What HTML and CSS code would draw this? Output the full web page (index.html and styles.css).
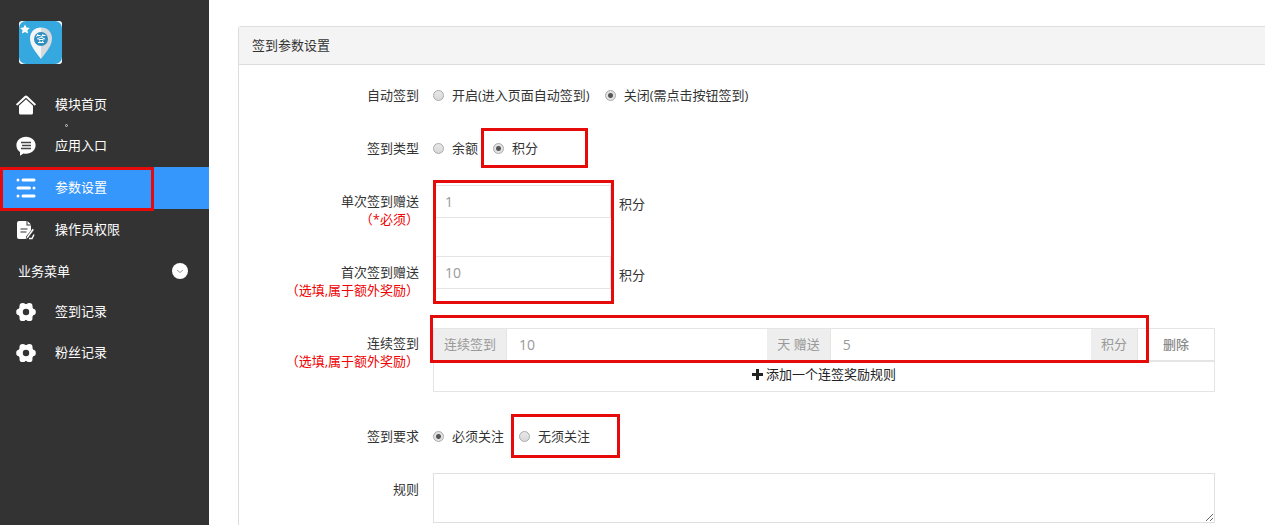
FILE: index.html
```html
<!DOCTYPE html>
<html lang="zh-Hans">
<head>
  <meta charset="UTF-8">
  <meta name="viewport" content="width=device-width, initial-scale=1.0">
  <title>签到参数设置</title>
  <link rel="stylesheet" href="styles.css">
</head>
<body>
  <div class="layout">
    <aside class="sidebar">
      <div class="logo">
        <svg viewBox="0 0 43 43" aria-hidden="true">
          <rect width="43" height="43" rx="3" fill="#fff"/>
          <rect width="43" height="43" rx="7" fill="#35a8e0"/>
          <path d="M6 3.500l1.500 3 3.300.4-2.400 2.300.7 3.300L6 11l-3.100 1.500.7-3.300L1.200 6.900l3.300-.4z" fill="#fff"/>
          <path d="M22 6.500C15.500 6.500 11 11 11 17.500 11 25 17 31 22 38z" fill="#f3f5f6"/>
          <path d="M22 6.500C28.500 6.500 33 11 33 17.500 33 25 27 31 22 38z" fill="#d5dade"/>
          <circle cx="22" cy="18" r="7" fill="#2f8fc0"/>
          <path d="M18 14.500h3.500M23 14.500h3.500M19 13l-1.500 3M24 13l-1.500 3M18 18l4-2 4 2M19.500 18.500h5M19 21.500h6M20.500 19.500l.7 1.500M24 19.500l-.7 1.500" fill="none" stroke="#fff"/>
        </svg>
      </div>
      <nav class="menu">
        <a class="menu-item" href="#">
          <svg class="icon" viewBox="0 0 20 20" fill="#fff" aria-hidden="true">
            <path d="M10 .5q.7 0 1.300.6l8.200 7.700q.6.7 0 1.300t-1.300.1L10 2.700 1.800 10.200q-.7.500-1.300-.1t0-1.300L8.700 1.100Q9.300.5 10 .5z"/>
            <path d="M10 4.300l7 6.500V18q0 1.500-1.500 1.500h-11Q3 19.500 3 18v-7.200z"/>
          </svg>
          <span>模块首页</span>
          <i class="speck"></i>
        </a>
        <a class="menu-item" href="#">
          <svg class="icon" viewBox="0 0 20 20" aria-hidden="true">
            <path d="M10 .8c5.500 0 9.600 3.700 9.600 8.500s-4.100 8.400-9.600 8.400c-.9 0-1.800-.1-2.600-.3L4 19.800v-3.700C1.800 14.600.4 12.200.4 9.300.4 4.500 4.500.8 10 .8z" fill="#fff"/>
            <path d="M5 6.500h10M6 9.500h9M5 12.500h10" stroke="#444" stroke-width="1.300"/>
          </svg>
          <span>应用入口</span>
        </a>
        <a class="menu-item active" href="#">
          <svg class="icon" viewBox="0 0 20 20" fill="none" stroke="#fff" stroke-width="3" stroke-linecap="round" aria-hidden="true">
            <path d="M2 2h.01M7 2h11M2 10h11.500M18 10h.01M2 18h.01M7 18h11"/>
          </svg>
          <span>参数设置</span>
          <b class="mark mark-menu"></b>
        </a>
        <a class="menu-item" href="#">
          <svg class="icon" viewBox="0 0 20 20" aria-hidden="true">
            <path d="M3 1h7.500v4.500H15V11l-5 5.500V19H3q-2 0-2-2V3q0-2 2-2z" fill="#fff"/>
            <path d="M11.500 1l3.500 3.500h-3.500z" fill="#fff"/>
            <path d="M4.500 9h7M4.500 12h6" stroke="#333" stroke-width="1.200"/>
            <path d="M16.500 8.500l1.700 1.300-6 8-2.200 1.700.7-2.900z" fill="#fff" stroke="#333" stroke-width=".5"/>
            <path d="M13 18.500h3l2-4" fill="none" stroke="#fff" stroke-width="1.400"/>
          </svg>
          <span>操作员权限</span>
        </a>
        <button class="menu-title" type="button">
          <span>业务菜单</span>
          <svg class="toggle" viewBox="0 0 16 16" aria-hidden="true">
            <circle cx="8" cy="8" r="8" fill="#fff"/>
            <path d="M5 7l3 2.500L11 7" fill="none" stroke="#999"/>
          </svg>
        </button>
        <a class="menu-item" href="#">
          <svg class="icon" viewBox="0 0 20 20" aria-hidden="true">
            <g fill="#fff">
              <circle cx="10" cy="10" r="8"/>
              <circle cx="16.600" cy="10" r="3.200"/>
              <circle cx="3.400" cy="10" r="3.200"/>
              <circle cx="13.300" cy="4.100" r="3.200"/>
              <circle cx="6.700" cy="4.100" r="3.200"/>
              <circle cx="13.300" cy="15.900" r="3.200"/>
              <circle cx="6.700" cy="15.900" r="3.200"/>
            </g>
            <circle cx="10" cy="10" r="3.200" fill="#333"/>
          </svg>
          <span>签到记录</span>
        </a>
        <a class="menu-item" href="#">
          <svg class="icon" viewBox="0 0 20 20" aria-hidden="true">
            <g fill="#fff">
              <circle cx="10" cy="10" r="8"/>
              <circle cx="16.600" cy="10" r="3.200"/>
              <circle cx="3.400" cy="10" r="3.200"/>
              <circle cx="13.300" cy="4.100" r="3.200"/>
              <circle cx="6.700" cy="4.100" r="3.200"/>
              <circle cx="13.300" cy="15.900" r="3.200"/>
              <circle cx="6.700" cy="15.900" r="3.200"/>
            </g>
            <circle cx="10" cy="10" r="3.200" fill="#333"/>
          </svg>
          <span>粉丝记录</span>
        </a>
      </nav>
    </aside>

    <main class="content">
      <form class="panel">
        <h1 class="panel-heading">签到参数设置</h1>
        <div class="panel-body">
          <div class="form-row" role="radiogroup" aria-labelledby="auto-label">
            <div class="form-label" id="auto-label">自动签到</div>
            <div class="radios">
              <label class="radio"><input type="radio" name="auto" value="1">开启(进入页面自动签到)</label>
              <label class="radio"><input type="radio" name="auto" value="0" checked>关闭(需点击按钮签到)</label>
            </div>
          </div>

          <div class="form-row" role="radiogroup" aria-labelledby="type-label">
            <div class="form-label" id="type-label">签到类型</div>
            <div class="radios">
              <label class="radio"><input type="radio" name="type" value="balance">余额</label>
              <label class="radio"><input type="radio" name="type" value="credit" checked>积分<b class="mark mark-type"></b></label>
            </div>
          </div>

          <div class="form-row">
            <label class="form-label" for="single">单次签到赠送<span class="hint">（*必须）</span></label>
            <div class="field">
              <input class="text-input" type="text" id="single" value="1">
              <span class="unit">积分</span>
              <b class="mark mark-gift"></b>
            </div>
          </div>

          <div class="form-row">
            <label class="form-label" for="first">首次签到赠送<span class="hint">（选填,属于额外奖励）</span></label>
            <div class="field">
              <input class="text-input" type="text" id="first" value="10">
              <span class="unit">积分</span>
            </div>
          </div>

          <div class="form-row">
            <label class="form-label" for="days">连续签到<span class="hint">（选填,属于额外奖励）</span></label>
            <div class="rules">
              <div class="rule">
                <label class="addon" for="days">连续签到</label>
                <input class="rule-input" type="text" id="days" value="10">
                <label class="addon" for="reward">天 赠送</label>
                <input class="rule-input" type="text" id="reward" value="5">
                <span class="addon">积分</span>
                <a class="delete" href="#">删除</a>
                <b class="mark mark-rule"></b>
              </div>
              <button class="add-rule" type="button">
                <svg class="plus" viewBox="0 0 11 11" aria-hidden="true"><path d="M5.500 0v11M0 5.500h11" stroke="#222" stroke-width="3"/></svg>
                添加一个连签奖励规则
              </button>
            </div>
          </div>

          <div class="form-row" role="radiogroup" aria-labelledby="follow-label">
            <div class="form-label" id="follow-label">签到要求</div>
            <div class="radios">
              <label class="radio"><input type="radio" name="follow" value="1" checked>必须关注</label>
              <label class="radio"><input type="radio" name="follow" value="0">无须关注<b class="mark mark-follow"></b></label>
            </div>
          </div>

          <div class="form-row">
            <label class="form-label" for="desc">规则</label>
            <textarea class="desc" id="desc"></textarea>
          </div>
        </div>
      </form>
    </main>
  </div>
</body>
</html>
```
FILE: styles.css
```css
* { box-sizing: border-box; }
body {
  margin: 0;
  font-family: "Open Sans", "Noto Sans CJK SC", sans-serif;
  font-size: 13px;
  line-height: 18px;
  color: #333;
  background: #fff;
}
input, button, textarea {
  font-family: inherit;
  font-size: 13px;
  line-height: 18px;
}
a {
  text-decoration: none;
}
.layout {
  display: flex;
  min-height: 100vh;
}

/* sidebar */
.sidebar {
  flex: 0 0 209px;
  background: #333;
}
.logo {
  padding: 21px 19px 20px;
}
.logo svg {
  display: block;
  width: 43px;
  height: 43px;
}
.menu-item, .menu-title {
  position: relative;
  display: flex;
  align-items: center;
  width: 100%;
  height: 41px;
  color: #fff;
}
.menu-item {
  gap: 19px;
  padding: 0 16px;
}
.menu-item span {
  padding-bottom: 2px;
}
.menu-item.active {
  height: 42px;
  margin-top: 1px;
  background: #3596fc;
}
.menu-title {
  justify-content: space-between;
  padding: 0 21px 0 18px;
  border: 0;
  background: none;
  cursor: pointer;
}
.icon {
  width: 20px;
  height: 20px;
}
.toggle {
  width: 16px;
  height: 16px;
}
.speck {
  position: absolute;
  left: 65px;
  bottom: -2px;
  width: 3px;
  height: 3px;
  border: 1px solid #ccc;
  border-radius: 50%;
}

/* panel */
.content {
  flex: 1;
  display: flex;
  min-width: 0;
  padding: 26px 0 0 29px;
}
.panel {
  flex: 1;
  min-width: 0;
  border: 1px solid #ddd;
  border-width: 1px 0 0 1px;
  border-radius: 3px 0 0 0;
}
.panel-heading {
  margin: 0;
  padding: 9px 13px 10px;
  font-size: 13px;
  font-weight: normal;
  line-height: 18px;
  background: #f4f4f4;
  border-bottom: 1px solid #ddd;
}
.panel-body {
  display: grid;
  gap: 21px;
  padding: 14px 50px 0 0;
}
.form-row {
  display: grid;
  grid-template-columns: 180px minmax(0, 1fr);
  column-gap: 14px;
  align-items: start;
}
.form-label {
  padding: 7px 0;
  text-align: right;
}
.hint {
  display: block;
  color: #e00;
}
.radios {
  display: flex;
  gap: 15px;
}
.radio {
  position: relative;
  display: flex;
  align-items: center;
  gap: 8px;
  height: 32px;
}
.radio input {
  appearance: none;
  width: 11px;
  height: 11px;
  margin: 0;
  border: 1px solid #aaa;
  border-radius: 50%;
  background: linear-gradient(#e8e8e8, #d8d8d8);
}
.radio input:checked {
  background: radial-gradient(circle, #555 0 2px, #e2e2e2 3px);
}
.field {
  position: relative;
  display: flex;
  gap: 8px;
}
.text-input {
  width: 178px;
  height: 33px;
  padding: 6px 11px;
  border: 1px solid #e5e5e5;
  font-size: 14px;
  color: #999;
}
.unit {
  padding-top: 10px;
}

/* reward rules */
.rules {
  padding-top: 1px;
  padding-bottom: 7px;
}
.rule {
  position: relative;
  display: flex;
  height: 33px;
  border: 1px solid #e5e5e5;
  line-height: 31px;
}
.addon {
  flex: none;
  padding: 0 10px;
  background: #eee;
  border-right: 1px solid #e5e5e5;
  color: #999;
}
.rule-input {
  flex: 1;
  min-width: 0;
  padding: 0 12px;
  border: 0;
  font-size: 14px;
  color: #999;
}
.delete {
  flex: 0 0 76px;
  text-align: center;
  font-weight: 500;
  color: #888;
}
.add-rule {
  display: flex;
  justify-content: center;
  align-items: center;
  gap: 3px;
  width: 100%;
  height: 31px;
  padding: 0 0 5px;
  border: 1px solid #e5e5e5;
  background: #fff;
  color: #222;
  cursor: pointer;
}
.plus {
  width: 11px;
  height: 11px;
}
.desc {
  display: block;
  width: 100%;
  height: 50px;
  padding: 6px 12px;
  border: 1px solid #e0e0e0;
  color: #999;
}

/* red frames over the settings to fill in */
.mark {
  position: absolute;
  z-index: 1;
  border: 3px solid #e60b0b;
  pointer-events: none;
}
.mark-menu {
  inset: 0 55px -2px 0;
}
.mark-type {
  inset: -4px -50px -4px -12px;
}
.mark-gift {
  top: -5px;
  left: 0;
  width: 181px;
  height: 124px;
}
.mark-rule {
  inset: -14px 65px -3px -4px;
}
.mark-follow {
  inset: -6px -30px -6px -8px;
}
```
